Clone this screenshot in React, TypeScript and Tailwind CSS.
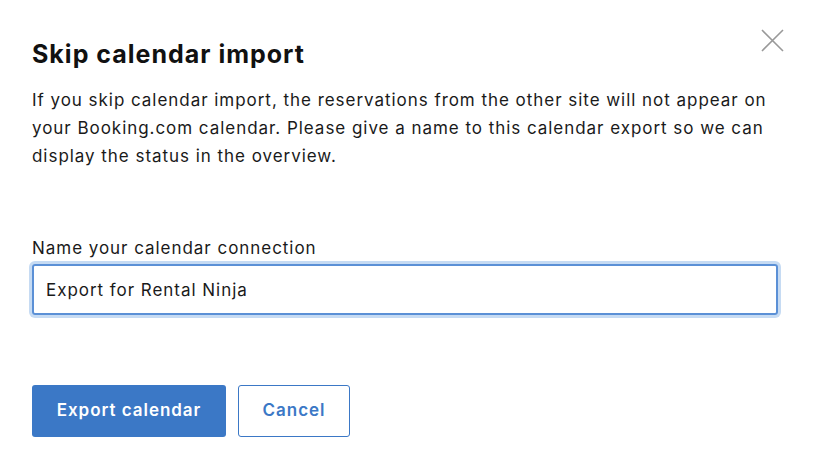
export default function App() {
  return (
    <div className="relative w-[828px] h-[467px] bg-white text-[#1a1a1a] tracking-[0.06em] font-['Inter','Liberation_Sans',sans-serif]">
      {/* close button sits over the dialog corner */}
      <button className="absolute left-[761px] top-[29px] text-[#999999]" aria-label="Close">
        <svg width="23" height="23" viewBox="0 0 23 23" fill="none" stroke="currentColor" strokeWidth="1.6">
          <path d="M1 1L22 22M22 1L1 22" />
        </svg>
      </button>
      <div className="px-8 pt-[38px]">
        <h2 className="text-[25px] font-bold leading-[32px] tracking-[0.04em] text-[#111111]">Skip calendar import</h2>
        <p className="mt-[16px] w-[760px] text-[17px] leading-[28px]">
          If you skip calendar import, the reservations from the other site will not appear on your Booking.com
          calendar. Please give a name to this calendar export so we can display the status in the overview.
        </p>
        <label htmlFor="name" className="block mt-[67px] text-[17px] leading-[22px]">
          Name your calendar connection
        </label>
        <input
          id="name"
          defaultValue="Export for Rental Ninja"
          className="block mt-[5px] w-[746px] h-[51px] px-[12px] text-[17px] text-[#1a1a1a] rounded-[3px] border-2 border-[#5b90d6] outline-none ring-[3px] ring-[#c6dbf3]"
        />
        <div className="mt-[70px] flex gap-3">
          <button className="w-[194px] h-[52px] rounded-[3px] bg-[#3b78c6] text-white text-[17px] font-semibold">
            Export calendar
          </button>
          <button className="w-[112px] h-[52px] rounded-[3px] border border-[#3b78c6] text-[#3b78c6] text-[17px] font-semibold">
            Cancel
          </button>
        </div>
      </div>
    </div>
  );
}
